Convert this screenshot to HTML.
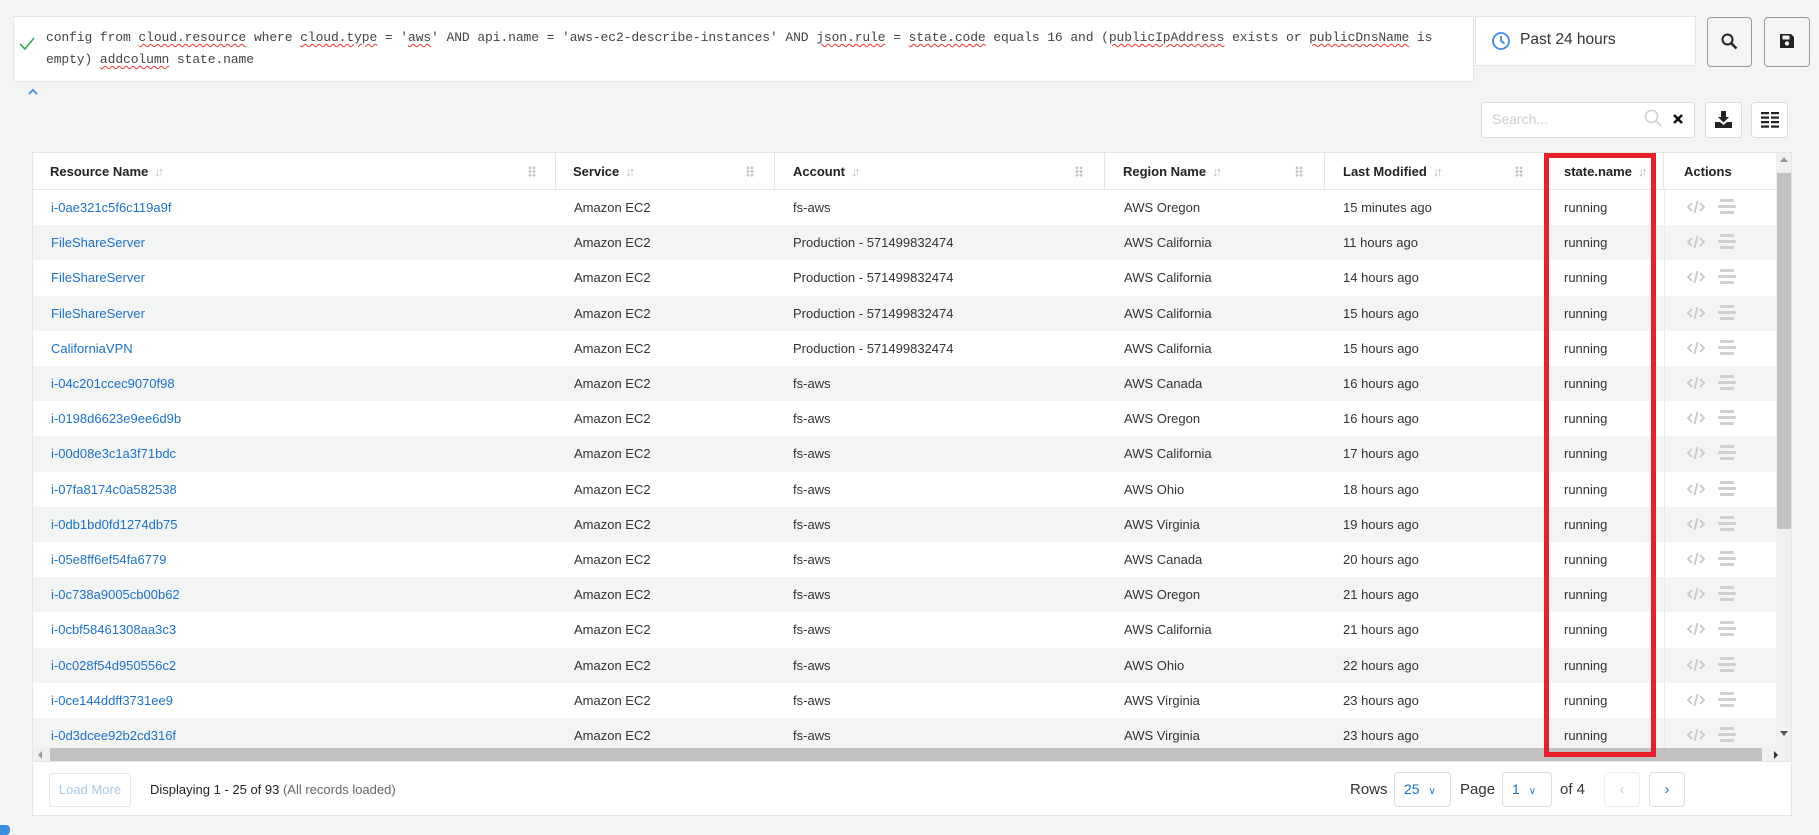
<!DOCTYPE html>
<html><head><meta charset="utf-8">
<style>
*{box-sizing:border-box;margin:0;padding:0}
body{width:1819px;height:830px;background:#f3f4f4;font-family:"Liberation Sans",sans-serif;font-size:13px;color:#333;position:relative;overflow:hidden}
.abs{position:absolute}
.q{left:13px;top:16px;width:1461px;height:66px;background:#fff;border:1px solid #e6e6e6}
.qt{left:46px;top:27px;font-family:"Liberation Mono",monospace;font-size:13px;line-height:22px;color:#444;width:1420px;letter-spacing:-0.1px}
.u{text-decoration:underline wavy #e33;text-decoration-thickness:1px;text-underline-offset:2px}
.time{left:1475px;top:16px;width:221px;height:50px;background:#fff;border:1px solid #e6e6e6}
.btn{border:1px solid #999;border-radius:4px;background:#f3f4f4}
.sbtn{border:1px solid #ddd;border-radius:4px;background:#fff}
.tbl{left:32px;top:152px;width:1760px;height:664px;background:#fff;border:1px solid #e6e6e6;overflow:hidden}
.hd{position:absolute;top:0;height:37px;border-bottom:1px solid #e6e6e6;width:100%}
.hc{position:absolute;top:0;height:37px;line-height:37px;font-weight:bold;font-size:13px;color:#222;border-right:1px solid #e6e6e6}
.sort{color:#bbb;font-weight:normal;font-size:13px;margin-left:6px;letter-spacing:-3px}
.grip{position:absolute;top:13px;width:8px;height:11px;background-image:radial-gradient(circle,#c4c4c4 1.3px,transparent 1.5px);background-size:4px 3.7px}
.row{position:absolute;left:0;width:1743px;height:35.2px;line-height:35px;font-size:13px}
.row span{position:absolute;white-space:nowrap}
.lnk{color:#1a73c9}
</style></head><body>

<div class="abs q"></div>
<svg class="abs" style="left:19px;top:37px" width="16" height="14" viewBox="0 0 16 14"><path d="M1 7 L6 12 L15 1" fill="none" stroke="#33aa55" stroke-width="1.6"/></svg>
<div class="abs qt">config from <span class="u">cloud.resource</span> where <span class="u">cloud.type</span> = '<span class="u">aws</span>' AND api.name = 'aws-ec2-describe-instances' AND <span class="u">json.rule</span> = <span class="u">state.code</span> equals 16 and (<span class="u">publicIpAddress</span> exists or <span class="u">publicDnsName</span> is empty) <span class="u">addcolumn</span> state.name</div>
<svg class="abs" style="left:27px;top:88px" width="12" height="8" viewBox="0 0 12 8"><path d="M2 6 L6 2 L10 6" fill="none" stroke="#3a8de0" stroke-width="1.8"/></svg>

<div class="abs time"></div>
<svg class="abs" style="left:1491px;top:31px" width="20" height="20" viewBox="0 0 20 20"><circle cx="10" cy="10" r="8" fill="none" stroke="#3a8de0" stroke-width="1.8"/><path d="M10 5 V10 L13.5 12.5" fill="none" stroke="#3a8de0" stroke-width="1.8"/></svg>
<div class="abs" style="left:1520px;top:31px;font-size:15.5px;color:#333">Past 24 hours</div>

<div class="abs btn" style="left:1707px;top:17px;width:45px;height:50px"></div>
<svg class="abs" style="left:1721px;top:33px" width="17" height="17" viewBox="0 0 17 17"><circle cx="6.5" cy="6.5" r="5" fill="none" stroke="#222" stroke-width="2"/><path d="M10 10 L15.5 15.5" stroke="#222" stroke-width="2.4"/></svg>
<div class="abs btn" style="left:1764px;top:17px;width:46px;height:50px"></div>
<svg class="abs" style="left:1779px;top:33px" width="16" height="16" viewBox="0 0 16 16"><path d="M1 1 H12 L15 4 V15 H1 Z" fill="#222"/><rect x="3.5" y="2.5" width="7" height="4" fill="#f3f4f4"/><circle cx="8" cy="10.5" r="2.2" fill="#f3f4f4"/></svg>

<div class="abs sbtn" style="left:1481px;top:102px;width:214px;height:36px"></div>
<div class="abs" style="left:1492px;top:111px;font-size:14px;color:#ccc">Search...</div>
<svg class="abs" style="left:1644px;top:109px" width="18" height="18" viewBox="0 0 18 18"><circle cx="7.5" cy="7.5" r="6" fill="none" stroke="#ccc" stroke-width="1.4"/><path d="M12 12 L17 17" stroke="#ccc" stroke-width="1.5"/></svg>
<svg class="abs" style="left:1672px;top:113px" width="12" height="12" viewBox="0 0 12 12"><path d="M2 2 L10 10 M10 2 L2 10" stroke="#111" stroke-width="2.6"/></svg>
<div class="abs sbtn" style="left:1705px;top:102px;width:37px;height:36px"></div>
<svg class="abs" style="left:1714px;top:110px" width="19" height="19" viewBox="0 0 19 19"><path d="M7 1 H12 V7 H15 L9.5 12.5 L4 7 H7 Z" fill="#222"/><path d="M1 12 H6 L9.5 15 L13 12 H18 V18 H1 Z" fill="#222"/></svg>
<div class="abs sbtn" style="left:1751px;top:102px;width:37px;height:36px"></div>
<svg class="abs" style="left:1761px;top:112px" width="18" height="16" viewBox="0 0 18 16"><g fill="#222"><rect x="0" y="0" width="8" height="2.2"/><rect x="10" y="0" width="8" height="2.2"/><rect x="0" y="4.5" width="8" height="2.2"/><rect x="10" y="4.5" width="8" height="2.2"/><rect x="0" y="9" width="8" height="2.2"/><rect x="10" y="9" width="8" height="2.2"/><rect x="0" y="13.5" width="8" height="2.2"/><rect x="10" y="13.5" width="8" height="2.2"/></g></svg>

<div class="abs tbl">
  <div class="hd">
    <div class="hc" style="left:0;width:523px;padding-left:17px">Resource Name<span class="sort">↓↑</span><div class="grip" style="left:495px"></div></div>
    <div class="hc" style="left:523px;width:219px;padding-left:17px">Service<span class="sort">↓↑</span><div class="grip" style="left:190px"></div></div>
    <div class="hc" style="left:742px;width:330px;padding-left:18px">Account<span class="sort">↓↑</span><div class="grip" style="left:300px"></div></div>
    <div class="hc" style="left:1072px;width:220px;padding-left:18px">Region Name<span class="sort">↓↑</span><div class="grip" style="left:190px"></div></div>
    <div class="hc" style="left:1292px;width:220px;padding-left:18px">Last Modified<span class="sort">↓↑</span><div class="grip" style="left:190px"></div></div>
    <div class="hc" style="left:1512px;width:119px;padding-left:19px">state.name<span class="sort">↓↑</span></div>
    <div class="hc" style="left:1631px;width:113px;padding-left:20px;border-right:none">Actions</div>
  </div>
  <div style="position:absolute;left:0;top:37px;width:1743px;height:558px;overflow:hidden">
  <div id="rows"></div>
  </div>
  <div style="position:absolute;left:1743px;top:0;width:16px;height:595px;background:#f0f0f0"></div>
  <div style="position:absolute;left:1744px;top:20px;width:14px;height:356px;background:#c1c1c1"></div>
  <div style="position:absolute;left:1747px;top:4px;width:0;height:0;border-left:4px solid transparent;border-right:4px solid transparent;border-bottom:5px solid #999"></div>
  <div style="position:absolute;left:1747px;top:578px;width:0;height:0;border-left:4px solid transparent;border-right:4px solid transparent;border-top:5px solid #555"></div>
  <div style="position:absolute;left:0;top:595px;width:1759px;height:13px;background:#f0f0f0"></div>
  <div style="position:absolute;left:17px;top:595px;width:1712px;height:13px;background:#c1c1c1"></div>
  <div style="position:absolute;left:5px;top:598px;border-top:4px solid transparent;border-bottom:4px solid transparent;border-right:4px solid #999"></div>
  <div style="position:absolute;left:1741px;top:598px;border-top:4px solid transparent;border-bottom:4px solid transparent;border-left:4px solid #333"></div>
  <div style="position:absolute;left:0;top:608px;width:1760px;border-top:1px solid #e6e6e6"></div>
  <div style="position:absolute;left:16px;top:620px;width:82px;height:34px;border:1px solid #e6e6e6;border-radius:4px;color:#aac9e8;font-size:13px;line-height:32px;text-align:center">Load More</div>
  <div style="position:absolute;left:117px;top:620px;line-height:34px;font-size:13px;color:#222">Displaying 1 - 25 of 93 <span style="color:#666">(All records loaded)</span></div>
  <div style="position:absolute;left:1317px;top:620px;line-height:34px;font-size:15px;color:#333">Rows</div>
  <div style="position:absolute;left:1361px;top:619px;width:57px;height:35px;border:1px solid #ddd;border-radius:4px;color:#1a73c9;font-size:14px;line-height:33px;padding-left:9px">25 <span style="font-size:10px;margin-left:5px">∨</span></div>
  <div style="position:absolute;left:1427px;top:620px;line-height:34px;font-size:15px;color:#333">Page</div>
  <div style="position:absolute;left:1469px;top:619px;width:50px;height:35px;border:1px solid #ddd;border-radius:4px;color:#1a73c9;font-size:14px;line-height:33px;padding-left:9px">1 <span style="font-size:10px;margin-left:5px">∨</span></div>
  <div style="position:absolute;left:1527px;top:620px;line-height:34px;font-size:15px;color:#333">of 4</div>
  <div style="position:absolute;left:1571px;top:619px;width:36px;height:35px;border:1px solid #eee;border-radius:4px;color:#bcd6f0;font-size:15px;line-height:33px;text-align:center">‹</div>
  <div style="position:absolute;left:1616px;top:619px;width:36px;height:35px;border:1px solid #ddd;border-radius:4px;color:#1a73c9;font-size:15px;line-height:33px;text-align:center">›</div>
</div>

<div class="abs" style="left:1544px;top:153px;width:112px;height:604px;border:5px solid #e8202a"></div>
<div class="abs" style="left:-4px;top:825px;width:14px;height:10px;background:#3a8de0;border-radius:4px"></div>

<script>
var d=[["i-0ae321c5f6c119a9f","fs-aws","AWS Oregon","15 minutes ago"],
["FileShareServer","Production - 571499832474","AWS California","11 hours ago"],
["FileShareServer","Production - 571499832474","AWS California","14 hours ago"],
["FileShareServer","Production - 571499832474","AWS California","15 hours ago"],
["CaliforniaVPN","Production - 571499832474","AWS California","15 hours ago"],
["i-04c201ccec9070f98","fs-aws","AWS Canada","16 hours ago"],
["i-0198d6623e9ee6d9b","fs-aws","AWS Oregon","16 hours ago"],
["i-00d08e3c1a3f71bdc","fs-aws","AWS California","17 hours ago"],
["i-07fa8174c0a582538","fs-aws","AWS Ohio","18 hours ago"],
["i-0db1bd0fd1274db75","fs-aws","AWS Virginia","19 hours ago"],
["i-05e8ff6ef54fa6779","fs-aws","AWS Canada","20 hours ago"],
["i-0c738a9005cb00b62","fs-aws","AWS Oregon","21 hours ago"],
["i-0cbf58461308aa3c3","fs-aws","AWS California","21 hours ago"],
["i-0c028f54d950556c2","fs-aws","AWS Ohio","22 hours ago"],
["i-0ce144ddff3731ee9","fs-aws","AWS Virginia","23 hours ago"],
["i-0d3dcee92b2cd316f","fs-aws","AWS Virginia","23 hours ago"]];
var h="";
var ic='<svg style="position:absolute;left:1654px;top:10px" width="18" height="14" viewBox="0 0 18 14"><path d="M5 3 L1 7 L5 11 M13 3 L17 7 L13 11 M10.5 1 L7.5 13" fill="none" stroke="#c8c8c8" stroke-width="1.8"/></svg><svg style="position:absolute;left:1685px;top:9px" width="18" height="16" viewBox="0 0 18 16"><g fill="#cfcfcf"><rect x="2" y="0" width="14" height="3" rx="1"/><rect x="0" y="6" width="18" height="3" rx="1"/><rect x="2" y="12" width="14" height="3" rx="1"/></g></svg>';
d.forEach(function(r,i){h+='<div class="row" style="top:'+(i*35.2)+'px;background:'+(i%2?'#f3f4f4':'#fff')+'"><span class="lnk" style="left:18px">'+r[0]+'</span><span style="left:541px">Amazon EC2</span><span style="left:760px">'+r[1]+'</span><span style="left:1091px">'+r[2]+'</span><span style="left:1310px">'+r[3]+'</span><span style="left:1531px">running</span><div style="position:absolute;left:1631px;top:0;height:36px;border-left:1px solid #eaeaea"></div>'+ic+'</div>';});
document.getElementById("rows").innerHTML=h;
</script>
</body></html>
